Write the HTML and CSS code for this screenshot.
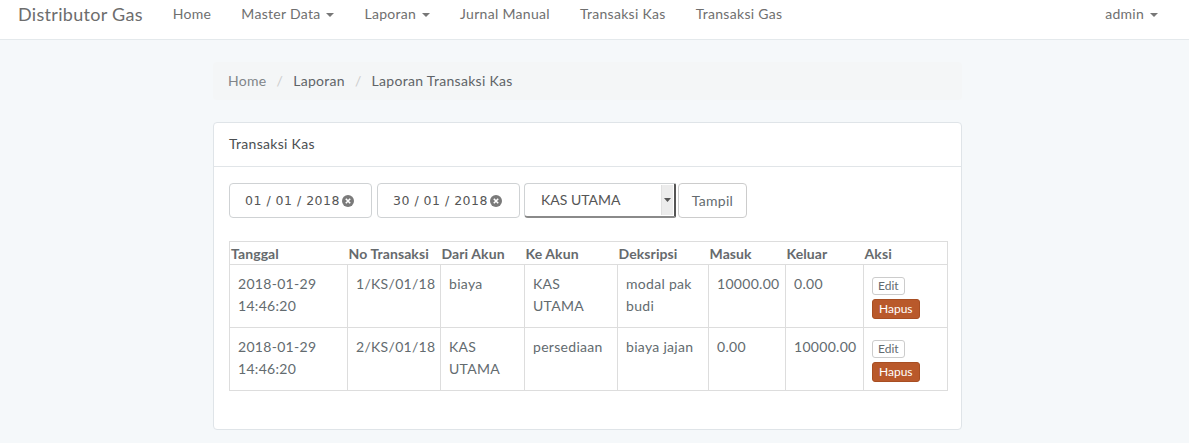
FILE: index.html
```html
<!DOCTYPE html>
<html>
<head>
<meta charset="utf-8">
<link rel="stylesheet" href="styles.css">
</head>
<body>
<nav class="navbar">
  <a class="brand">Distributor Gas</a>
  <ul class="nav">
    <li>Home</li>
    <li>Master Data <span class="caret"></span></li>
    <li>Laporan <span class="caret"></span></li>
    <li>Jurnal Manual</li>
    <li>Transaksi Kas</li>
    <li>Transaksi Gas</li>
  </ul>
  <ul class="nav nav-right">
    <li>admin <span class="caret"></span></li>
  </ul>
</nav>
<main class="main">
  <ol class="breadcrumb">
    <li class="bc-link">Home</li>
    <li class="sep">/</li>
    <li>Laporan</li>
    <li class="sep">/</li>
    <li>Laporan Transaksi Kas</li>
  </ol>
  <section class="panel">
    <div class="panel-heading">Transaksi Kas</div>
    <div class="panel-body">
      <form class="filter">
        <div class="date-input"><span class="date-text">01 / 01 / 2018</span><svg class="clear" width="12" height="12" viewBox="0 0 12 12"><circle cx="6" cy="6" r="6" fill="#7a7a7a"/><path d="M3.8 3.8 L8.2 8.2 M8.2 3.8 L3.8 8.2" stroke="#fff" stroke-width="1.6"/></svg></div>
        <div class="date-input"><span class="date-text">30 / 01 / 2018</span><svg class="clear" width="12" height="12" viewBox="0 0 12 12"><circle cx="6" cy="6" r="6" fill="#7a7a7a"/><path d="M3.8 3.8 L8.2 8.2 M8.2 3.8 L3.8 8.2" stroke="#fff" stroke-width="1.6"/></svg></div>
        <div class="select"><span>KAS UTAMA</span><span class="sel-arrow"><svg width="7" height="4" viewBox="0 0 7 4"><path d="M0 0 L7 0 L3.5 4 Z" fill="#555"/></svg></span></div>
        <button type="button" class="btn">Tampil</button>
      </form>
      <table class="table">
        <colgroup>
          <col style="width:118px"><col style="width:93px"><col style="width:84px"><col style="width:93px"><col style="width:91px"><col style="width:77px"><col style="width:78px"><col style="width:84px">
        </colgroup>
        <thead>
          <tr><th>Tanggal</th><th>No Transaksi</th><th>Dari Akun</th><th>Ke Akun</th><th>Deksripsi</th><th>Masuk</th><th>Keluar</th><th>Aksi</th></tr>
        </thead>
        <tbody>
          <tr>
            <td>2018-01-29<br>14:46:20</td><td>1/KS/01/18</td><td>biaya</td><td>KAS<br>UTAMA</td><td>modal pak<br>budi</td><td>10000.00</td><td>0.00</td>
            <td><div class="actions"><button type="button" class="btn-xs">Edit</button><button type="button" class="btn-xs danger">Hapus</button></div></td>
          </tr>
          <tr>
            <td>2018-01-29<br>14:46:20</td><td>2/KS/01/18</td><td>KAS<br>UTAMA</td><td>persediaan</td><td>biaya jajan</td><td>0.00</td><td>10000.00</td>
            <td><div class="actions"><button type="button" class="btn-xs">Edit</button><button type="button" class="btn-xs danger">Hapus</button></div></td>
          </tr>
        </tbody>
      </table>
    </div>
  </section>
</main>
</body>
</html>
```
FILE: styles.css
```css
* { box-sizing: border-box; }
html, body { margin: 0; padding: 0; }
body {
  background: #f5f8fa;
  font-family: "Lato", "Open Sans", sans-serif;
  font-size: 14px;
  line-height: 1.6;
  color: #636b6f;
  letter-spacing: 0.3px;
  width: 1189px;
  height: 443px;
  overflow: hidden;
}
.navbar {
  display: flex;
  align-items: flex-start;
  height: 40px;
  background: #fff;
  border-bottom: 1px solid #e4e9ec;
  padding: 0 16px 0 18px;
}
.brand {
  font-size: 18px;
  line-height: 28px;
  color: #6d6d6d;
  margin-right: 15px;
}
.nav {
  list-style: none;
  margin: 0;
  padding: 0;
  display: flex;
}
.nav li {
  padding: 0 15px;
  line-height: 28px;
  color: #6f6f6f;
  white-space: nowrap;
}
.nav-right { margin-left: auto; }
.caret {
  display: inline-block;
  width: 0; height: 0;
  margin-left: 2px;
  vertical-align: middle;
  border-top: 4px solid #777;
  border-left: 4px solid transparent;
  border-right: 4px solid transparent;
}
.main {
  padding: 22px 0 0 213px;
}
.breadcrumb {
  list-style: none;
  margin: 0 0 22px 0;
  padding: 8px 15px;
  width: 749px;
  height: 38px;
  background: #f4f6f7;
  border-radius: 4px;
  display: flex;
  gap: 10px;
  color: #5f6468;
}
.breadcrumb .bc-link { color: #818589; }
.breadcrumb .sep { color: #ccc; }
.panel {
  width: 749px;
  background: #fff;
  border: 1px solid #dfe4e8;
  border-radius: 4px;
}
.panel-heading {
  padding: 10px 15px;
  border-bottom: 1px solid #e1e5e8;
  color: #4b4f52;
  height: 44px;
}
.panel-body {
  padding: 15px 15px 16px;
}
.filter {
  display: flex;
  gap: 4px;
  margin: 0 0 23px 0;
  padding-top: 1px;
}
.date-input {
  width: 143px;
  height: 35px;
  border: 1px solid #cfd2d4;
  border-radius: 4px;
  display: flex;
  align-items: center;
  padding-left: 15px;
  gap: 2px;
  font-family: "DejaVu Sans", sans-serif;
  font-size: 12.5px;
  color: #555;
  letter-spacing: 0.5px;
}
.date-input + .date-input { margin-left: 1px; }
.clear { flex: none; }
.select {
  width: 152px;
  height: 35px;
  border: 1px solid #cfd2d4;
  border-right: 2px solid #555;
  border-bottom: 2px solid #8a8a8a;
  border-radius: 4px 2px 2px 4px;
  display: flex;
  align-items: center;
  padding-left: 16px;
  color: #555;
  letter-spacing: 0;
  position: relative;
}
.sel-arrow {
  position: absolute;
  right: 1px;
  top: 1px;
  bottom: 1px;
  width: 12px;
  background: #ececec;
  border-left: 1px solid #e0e0e0;
  display: flex;
  align-items: center;
  justify-content: center;
}
.btn {
  height: 35px;
  width: 69px;
  margin-left: -2px;
  border: 1px solid #ccc;
  border-radius: 4px;
  background: #fff;
  font-family: inherit;
  font-size: 14px;
  letter-spacing: 0.3px;
  color: #636b6f;
  padding: 0;
}
.table {
  border-collapse: collapse;
  table-layout: fixed;
  width: 718px;
  border: 1px solid #dddddd;
  margin-bottom: 22px;
}
.table th {
  text-align: left;
  font-weight: 700;
  padding: 0 1px;
  height: 23px;
  line-height: 21px;
  color: #666a6d;
  border-bottom: 1px solid #ddd;
  white-space: nowrap;
  letter-spacing: 0.1px;
}
.table td {
  vertical-align: top;
  padding: 8px 8px 7px;
  border: 1px solid #ddd;
  height: 63px;
  line-height: 22px;
}
.actions {
  display: flex;
  flex-direction: column;
  align-items: flex-start;
  gap: 4px;
  padding-top: 4px;
}
.btn-xs {
  font-family: inherit;
  font-size: 12px;
  line-height: 16px;
  padding: 0 5px;
  height: 18px;
  border: 1px solid #ccc;
  border-radius: 3px;
  background: #fff;
  color: #636b6f;
  letter-spacing: 0;
}
.btn-xs.danger {
  background: #b9592b;
  border-color: #a84e22;
  color: #fff;
  height: 20px;
  padding: 0 6px;
}
```
